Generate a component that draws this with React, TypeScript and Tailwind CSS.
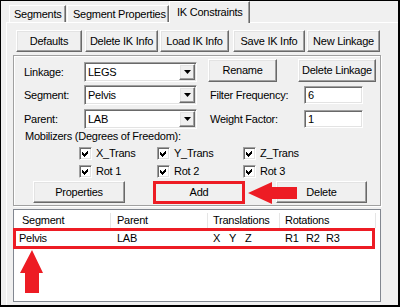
import type {ReactNode} from 'react';

// classic 3D edges
const raised =
  'border border-t-white border-l-white border-b-[#696969] border-r-[#696969] shadow-[inset_-1px_-1px_0_#a0a0a0,inset_1px_1px_0_#e3e3e3] bg-[#f0f0f0]';
const sunken =
  'border border-t-[#a0a0a0] border-l-[#a0a0a0] border-b-white border-r-white shadow-[inset_1px_1px_0_#696969,inset_-1px_-1px_0_#e3e3e3] bg-white';

function Button({className, children}: {className: string; children: ReactNode}) {
  return (
    <div className={`flex h-[22px] items-center justify-center ${raised} ${className}`}>{children}</div>
  );
}

function Combo({value}: {value: string}) {
  return (
    <div className={`flex h-[20px] w-[113px] items-center p-[1px] ${sunken}`}>
      <span className="flex-1 pl-[2px]">{value}</span>
      <span className={`flex h-full w-[16px] items-center justify-center ${raised}`}>
        <svg width="7" height="4" viewBox="0 0 7 4">
          <path d="M0 0h7L3.5 4z" fill="#000" />
        </svg>
      </span>
    </div>
  );
}

function Field({value}: {value: string}) {
  return (
    <div className={`flex h-[18px] w-[59px] items-center pl-[3px] ${sunken}`}>{value}</div>
  );
}

function Check({label, className}: {label: string; className: string}) {
  return (
    <div className={`flex items-center ${className}`}>
      <span className={`flex h-[13px] w-[13px] items-center justify-center ${sunken}`}>
        <svg width="7" height="7" viewBox="0 0 7 7" shapeRendering="crispEdges">
          <path d="M0 2L2 4L6 0V3L2 7L0 5Z" fill="#000" />
        </svg>
      </span>
      <span className="ml-[4px]">{label}</span>
    </div>
  );
}

const tab =
  'flex border-t border-l border-r border-t-white border-l-white border-r-[#696969] shadow-[inset_-1px_0_0_#a0a0a0] bg-[#f0f0f0]';

export default function App() {
  return (
    <div className="relative flex h-[307px] w-[400px] flex-col overflow-hidden border-t border-l border-r-2 border-b-2 border-black bg-[#f0f0f0] font-['Liberation_Sans',Arial,sans-serif] text-[11px] leading-none tracking-[-0.25px] text-black">
      {/* tabs */}
      <div className="flex h-[21px] shrink-0 items-end pl-[8px]">
        <div className={`${tab} h-[17px] w-[57px] items-center pl-[4px]`}>Segments</div>
        <div className={`${tab} ml-[1px] h-[17px] w-[102px] items-center pl-[5px]`}>Segment Properties</div>
        <div className={`${tab} relative z-10 -mb-px h-[22px] w-[81px] items-center pb-[1px] pl-[7px]`}>
          IK Constraints
        </div>
      </div>

      {/* tab page */}
      <div className="flex flex-1 flex-col border-t border-l border-white ml-[5px] pt-[7px] pl-[9px]">
        <div className="flex h-[22px]">
          <Button className="w-[66px]">Defaults</Button>
          <Button className="ml-[3px] w-[73px]">Delete IK Info</Button>
          <Button className="ml-[2px] w-[69px]">Load IK Info</Button>
          <Button className="ml-[4px] w-[72px]">Save IK Info</Button>
          <Button className="ml-[2px] w-[73px]">New Linkage</Button>
        </div>

        <div className="ml-[-3px] mt-[3px] flex h-[151px] w-[368px] flex-col border border-[#a0a0a0] pt-[3px] shadow-[inset_1px_1px_0_#fff,1px_1px_0_#fff]">
          <div className="flex h-[23px] items-end">
            <div className="flex h-[20px] w-[70px] items-center pl-[10px]">Linkage:</div>
            <Combo value="LEGS" />
            <Button className="ml-[11px] h-[23px] w-[69px]">Rename</Button>
            <Button className="ml-[21px] h-[23px] w-[78px]">Delete Linkage</Button>
          </div>
          <div className="mt-[3px] flex h-[20px] items-center">
            <div className="w-[70px] pl-[10px]">Segment:</div>
            <Combo value="Pelvis" />
            <div className="ml-[13px] w-[94px]">Filter Frequency:</div>
            <Field value="6" />
          </div>
          <div className="mt-[4px] flex h-[20px] items-center">
            <div className="w-[70px] pl-[10px]">Parent:</div>
            <Combo value="LAB" />
            <div className="ml-[13px] w-[94px]">Weight Factor:</div>
            <Field value="1" />
          </div>
          <div className="flex h-[14px] items-center pl-[11px]">Mobilizers (Degrees of Freedom):</div>
          <div className="mt-[2px] flex h-[16px] items-center pl-[65px]">
            <Check label="X_Trans" className="w-[78px]" />
            <Check label="Y_Trans" className="w-[86px]" />
            <Check label="Z_Trans" className="w-[80px]" />
          </div>
          <div className="mt-[2px] flex h-[16px] items-center pl-[65px]">
            <Check label="Rot 1" className="w-[78px]" />
            <Check label="Rot 2" className="w-[86px]" />
            <Check label="Rot 3" className="w-[80px]" />
          </div>
          <div className="mt-[2px] flex h-[23px] items-start">
            <Button className="ml-[19px] w-[92px]">Properties</Button>
            <div className="ml-[28px] flex h-[23px] w-[92px] items-center justify-center border-[3px] border-[#ed1c24] bg-[#f0f0f0]">
              Add
            </div>
            <Button className="ml-[31px] w-[91px]">Delete</Button>
          </div>
        </div>

        {/* list view */}
        <div className="relative ml-[-3px] mt-[3px] h-[93px] w-[368px] border border-[#828790] bg-white">
          <div className="flex h-[18px] pt-[3px]">
            <div className="flex w-[97px] items-center border-r border-[#e5e5e5] pl-[8px]">Segment</div>
            <div className="flex w-[97px] items-center border-r border-[#e5e5e5] pl-[6px]">Parent</div>
            <div className="flex w-[72px] items-center border-r border-[#e5e5e5] pl-[5px]">Translations</div>
            <div className="flex w-[96px] items-center border-r border-[#e5e5e5] pl-[5px]">Rotations</div>
          </div>
          <div className="flex h-[20px] items-center">
            <div className="w-[97px] pl-[5px]">Pelvis</div>
            <div className="w-[97px] pl-[6px]">LAB</div>
            <div className="flex w-[72px] pl-[5px]">
              <span className="w-[16px]">X</span>
              <span className="w-[16px]">Y</span>
              <span>Z</span>
            </div>
            <div className="flex w-[96px] pl-[5px]">
              <span className="w-[21px]">R1</span>
              <span className="w-[20px]">R2</span>
              <span>R3</span>
            </div>
          </div>
          <div className="absolute left-[-1px] top-[18px] h-[21px] w-[362px] border-[3px] border-[#ed1c24]" />
        </div>
      </div>

      {/* annotation arrows */}
      <svg
        className="pointer-events-none absolute left-[-1px] top-[-1px]"
        width="400"
        height="307"
        viewBox="0 0 400 307"
      >
        <polygon points="248,193 272,182 272,187 297,187 297,199 272,199 272,204" fill="#ed1c24" />
        <polygon points="32,250 43,273 39,273 39,293 25,293 25,273 20,273" fill="#ed1c24" />
      </svg>
    </div>
  );
}
